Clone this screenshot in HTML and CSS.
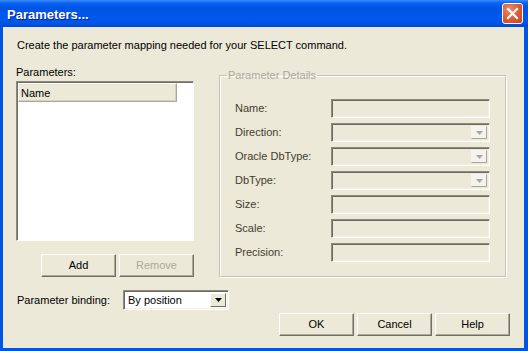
FILE: index.html
```html
<!DOCTYPE html>
<html>
<head>
<meta charset="utf-8">
<link rel="stylesheet" href="styles.css">
</head>
<body>
<div class="window">
  <div class="titlebar">
    <span class="title">Parameters...</span>
    <div class="close">
      <svg width="13" height="13" viewBox="0 0 13 13"><path d="M2 2 L11 11 M11 2 L2 11" stroke="#fff" stroke-width="2.2" stroke-linecap="square"/></svg>
    </div>
  </div>
  <div class="client">
    <p class="intro">Create the parameter mapping needed for your SELECT command.</p>
    <div class="main">
      <div class="left">
        <div class="lbl">Parameters:</div>
        <div class="listbox">
          <div class="lv-header"><div class="lv-col">Name</div></div>
        </div>
        <div class="btnrow">
          <div class="btn">Add</div>
          <div class="btn disabled">Remove</div>
        </div>
      </div>
      <fieldset class="details">
        <legend>Parameter Details</legend>
        <div class="grid">
          <div class="flbl">Name:</div><div class="field"></div>
          <div class="flbl">Direction:</div><div class="field combo"><div class="dd"><svg width="7" height="4" viewBox="0 0 7 4"><path d="M0 0 H7 L3.5 4 Z" fill="#aca899"/></svg></div></div>
          <div class="flbl">Oracle DbType:</div><div class="field combo"><div class="dd"><svg width="7" height="4" viewBox="0 0 7 4"><path d="M0 0 H7 L3.5 4 Z" fill="#aca899"/></svg></div></div>
          <div class="flbl">DbType:</div><div class="field combo"><div class="dd"><svg width="7" height="4" viewBox="0 0 7 4"><path d="M0 0 H7 L3.5 4 Z" fill="#aca899"/></svg></div></div>
          <div class="flbl">Size:</div><div class="field"></div>
          <div class="flbl">Scale:</div><div class="field"></div>
          <div class="flbl">Precision:</div><div class="field"></div>
        </div>
      </fieldset>
    </div>
    <div class="binding">
      <div class="blbl">Parameter binding:</div>
      <div class="select">
        <span class="sval">By position</span>
        <div class="sdd"><svg width="7" height="4" viewBox="0 0 7 4"><path d="M0 0 H7 L3.5 4 Z" fill="#000"/></svg></div>
      </div>
    </div>
    <div class="footer">
      <div class="btn">OK</div>
      <div class="btn">Cancel</div>
      <div class="btn">Help</div>
    </div>
  </div>
</div>
</body>
</html>
```

FILE: styles.css
```css
* { box-sizing: border-box; }
html, body { margin: 0; padding: 0; }
body {
  font-family: "Liberation Sans", Arial, sans-serif;
  font-size: 11px;
  line-height: 13px;
  color: #000;
  background: #ece9d8;
}
.window {
  width: 528px;
  height: 351px;
  display: flex;
  flex-direction: column;
  background: #0055e5;
}
.titlebar {
  height: 27px;
  flex: none;
  display: flex;
  align-items: flex-start;
  justify-content: space-between;
  background: linear-gradient(to bottom, #3b8dfb 0px, #0a62f2 3px, #0054e3 8px, #0058ee 18px, #0054e3 24px, #0046d6 27px);
}
.title {
  margin: 8px 0 0 7px;
  font-weight: bold;
  font-size: 13px;
  line-height: 14px;
  color: #fff;
  text-shadow: 1px 1px 0 #0a1e8c;
}
.close {
  margin: 3px 5px 0 0;
  width: 21px;
  height: 21px;
  border: 1px solid #fff;
  border-radius: 3px;
  background: radial-gradient(circle at 35% 30%, #f08a6a 0, #e0603c 45%, #c4401f 100%);
  display: flex;
  align-items: center;
  justify-content: center;
}
.client {
  flex: 1;
  margin: 0 4px 3px 3px;
  background: #ece9d8;
  display: flex;
  flex-direction: column;
}
.intro {
  margin: 12px 0 0 14px;
}
.main {
  display: flex;
  margin-top: 14px;
  height: 211px;
}
.left {
  width: 178px;
  margin-left: 13px;
  display: flex;
  flex-direction: column;
}
.listbox {
  margin-top: 2px;
  height: 160px;
  background: #fff;
  border-style: solid;
  border-width: 1px;
  border-color: #8d8a7c #fff #fff #8d8a7c;
  box-shadow: inset 1px 1px 0 #716f64;
  padding: 1px 0 0 1px;
}
.lv-header {
  display: flex;
}
.lv-col {
  width: 159px;
  height: 19px;
  padding: 3px 0 0 2px;
  background: #ece9d8;
  border-style: solid;
  border-width: 1px;
  border-color: #fff #aca899 #aca899 #fff;
  box-shadow: inset -1px -1px 0 #d6d2c2;
}
.btnrow {
  display: flex;
  gap: 3px;
  margin: 13px 0 0 25px;
}
.btn {
  width: 75px;
  height: 23px;
  display: flex;
  align-items: center;
  justify-content: center;
  background: #ece9d8;
  border-style: solid;
  border-width: 1px;
  border-color: #fff #716f64 #716f64 #fff;
  box-shadow: inset -1px -1px 0 #aca899;
  padding-bottom: 1px;
}
.btn.disabled {
  color: #aca899;
}
.details {
  margin: 3px 0 0 25px;
  padding: 0;
  width: 287px;
  height: 208px;
  border: 1px solid #c7c4b4;
  box-shadow: inset 1px 1px 0 #fff, 1px 1px 0 #fff;
  min-width: 0;
}
.details legend {
  margin-left: 7px;
  padding: 0 1px;
  color: #aca899;
  line-height: 13px;
}
.grid {
  display: grid;
  grid-template-columns: 96px 159px;
  grid-auto-rows: 19px;
  row-gap: 5px;
  margin: 17px 0 0 15px;
}
.flbl {
  display: flex;
  align-items: center;
  color: #3f3d2e;
}
.field {
  height: 19px;
  border-style: solid;
  border-width: 1px;
  border-color: #8d8a7c #fff #fff #8d8a7c;
  box-shadow: inset 1px 1px 0 #6e6b5e, inset -1px -1px 0 #f1efe2;
  background: #ece9d8;
  display: flex;
  justify-content: flex-end;
  padding: 2px;
}
.dd {
  width: 16px;
  height: 13px;
  background: #f4f3ee;
  border-style: solid;
  border-width: 1px;
  border-color: #f4f3ee #aca899 #aca899 #f4f3ee;
  display: flex;
  align-items: center;
  justify-content: center;
}
.binding {
  display: flex;
  align-items: center;
  margin: 13px 0 0 14px;
  height: 20px;
}
.blbl {
  width: 106px;
}
.select {
  width: 106px;
  height: 20px;
  background: #fff;
  border-style: solid;
  border-width: 1px;
  border-color: #8d8a7c #fff #fff #8d8a7c;
  box-shadow: inset 1px 1px 0 #6e6b5e, inset -1px -1px 0 #f1efe2;
  display: flex;
  align-items: center;
  justify-content: space-between;
  padding: 2px;
}
.sval {
  padding-left: 2px;
}
.sdd {
  width: 16px;
  height: 14px;
  background: #ece9d8;
  border-style: solid;
  border-width: 1px;
  border-color: #fff #716f64 #716f64 #fff;
  display: flex;
  align-items: center;
  justify-content: center;
}
.footer {
  display: flex;
  justify-content: flex-end;
  gap: 3px;
  margin: 3px 14px 0 0;
}
```
